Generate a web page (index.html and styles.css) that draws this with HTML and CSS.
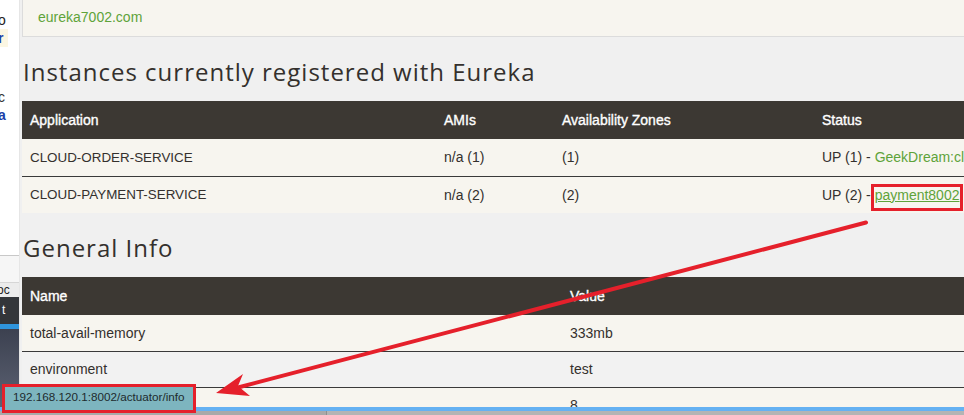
FILE: index.html
```html
<!DOCTYPE html>
<html>
<head>
<meta charset="utf-8">
<link rel="stylesheet" href="styles.css">
</head>
<body>
<div class="screen">
  <div class="main">
    <div class="sidewin">
      <div class="sw-top">
        <div class="sw-line l1">o</div>
        <div class="sw-line l2 hl">r</div>
        <div class="sw-line l3">c</div>
        <div class="sw-line l4 blue">a</div>
      </div>
      <div class="sw-sep"></div>
      <div class="sw-light"></div>
      <div class="sw-tab">oc</div>
      <div class="sw-dark">t</div>
      <div class="sw-blue"></div>
      <div class="sw-desk"></div>
    </div>
    <div class="page">
      <div class="content">
        <div class="topbox"><a class="lnk">eureka7002.com</a></div>
        <h2 class="heading h-first">Instances currently registered with Eureka</h2>
        <table class="tbl inst">
          <colgroup><col class="c1"><col class="c2"><col class="c3"><col class="c4"></colgroup>
          <thead>
            <tr><th>Application</th><th>AMIs</th><th>Availability Zones</th><th>Status</th></tr>
          </thead>
          <tbody>
            <tr><td class="app">CLOUD-ORDER-SERVICE</td><td>n/a (1)</td><td>(1)</td><td>UP (1) - <a class="lnk">GeekDream:cloud-order-service</a></td></tr>
            <tr><td class="app">CLOUD-PAYMENT-SERVICE</td><td>n/a (2)</td><td>(2)</td><td>UP (2) - <a class="lnk ul">payment8002</a> , <a class="lnk ul">payment8001</a></td></tr>
          </tbody>
        </table>
        <h2 class="heading h-second">General Info</h2>
        <table class="tbl info">
          <colgroup><col class="n1"><col class="n2"></colgroup>
          <thead>
            <tr><th>Name</th><th>Value</th></tr>
          </thead>
          <tbody>
            <tr><td>total-avail-memory</td><td>333mb</td></tr>
            <tr class="plain"><td>environment</td><td>test</td></tr>
            <tr><td>num-of-cpus</td><td>8</td></tr>
          </tbody>
        </table>
      </div>
    </div>
  </div>
  <div class="bar-blue"></div>
  <div class="bar-gray"><div class="bg-a"></div><div class="bg-b"></div></div>

  <div class="tooltip">192.168.120.1:8002/actuator/info</div>

  <svg class="annot" width="964" height="415" viewBox="0 0 964 415">
    <rect x="872.5" y="185.5" width="89" height="24" fill="none" stroke="#e5202b" stroke-width="3"/>
    <line x1="866" y1="222.5" x2="238" y2="387.5" stroke="#e5202b" stroke-width="4" stroke-linecap="round"/>
    <polygon points="216,393 243,374 238,386 250,396" fill="#e5202b"/>
  </svg>
</div>
</body>
</html>
```
FILE: styles.css
```css
* { box-sizing: border-box; }
html, body { margin: 0; padding: 0; }
body {
  width: 964px;
  height: 415px;
  overflow: hidden;
  font-family: "Liberation Sans", Arial, sans-serif;
  font-size: 14px;
  color: #34302d;
  background: #f0f0f0;
}
.screen {
  position: relative;
  width: 964px;
  height: 415px;
  display: flex;
  flex-direction: column;
  overflow: hidden;
}
.main {
  display: flex;
  height: 407px;
  flex: none;
}

/* left partially visible window */
.sidewin {
  width: 20px;
  flex: none;
  display: flex;
  flex-direction: column;
  background: #ffffff;
  overflow: hidden;
  font-family: "Liberation Sans", Arial, sans-serif;
  font-size: 14px;
  border-right: 1px solid #e6e6e6;
}
.sw-top { height: 255px; padding-top: 11px; }
.sw-line {
  width: 8px;
  height: 18px;
  line-height: 18px;
  text-indent: -2px;
  color: #222;
  overflow: hidden;
}
.sw-line.hl { background: #fbf6e2; color: #1a3fa8; font-weight: bold; }
.sw-line.l3 { margin-top: 41px; color: #333; }
.sw-line.blue { color: #1a3fa8; font-weight: bold; }
.sw-sep { height: 1px; background: #c8c8c8; }
.sw-light { height: 27px; background: #f6f6f6; border-bottom: 1px solid #d6d6d6; }
.sw-tab {
  height: 14px;
  line-height: 14px;
  font-size: 12px;
  background: #ececec;
  color: #222;
  white-space: nowrap;
  text-indent: -3px;
  overflow: hidden;
}
.sw-dark {
  height: 27px;
  line-height: 27px;
  background: #33363a;
  color: #fff;
  font-size: 12px;
  padding-left: 2px;
}
.sw-blue { height: 5px; background: #2f95dc; }
.sw-desk { flex: 1; background: linear-gradient(#3c4150, #5c6273); }

/* main page */
.page {
  flex: 1;
  overflow: hidden;
  background: #f0f0f0;
  padding-left: 2px;
}
.content { width: 1100px; }
.topbox {
  height: 37px;
  background: #f7f5ef;
  border-left: 1px solid #dcdcdc;
  border-bottom: 1px solid #dcdcdc;
  padding-left: 15px;
  line-height: 34px;
  font-size: 14px;
}
.lnk { color: #5ea33a; text-decoration: none; }
.lnk.ul { text-decoration: underline; }

.heading {
  margin: 0;
  font-family: "Open Sans", sans-serif;
  font-weight: 400;
  font-size: 24px;
  letter-spacing: 1px;
  color: #34302d;
  padding-left: 1px;
  display: flex;
  align-items: center;
}
.h-first { height: 64px; padding-top: 4px; }
.h-second { height: 64px; padding-top: 4px; }

.tbl {
  border-collapse: collapse;
  table-layout: fixed;
  width: 1100px;
}
.tbl th {
  height: 38px;
  background: #3c3833;
  color: #fff;
  text-align: left;
  font-weight: normal;
  -webkit-text-stroke: 0.35px #fff;
  font-size: 14px;
  padding: 0 8px;
  white-space: nowrap;
}
.tbl td {
  height: 36px;
  background: #f7f5ef;
  padding: 0 8px;
  white-space: nowrap;
  overflow: hidden;
  font-size: 14px;
}
.inst td { height: 37px; }
.inst td.app { font-size: 13.4px; }
.tbl tbody tr + tr td { border-top: 1px solid #3a3a3a; }
.tbl tr.plain td { background: #f2f2f2; }
.c1 { width: 414px; }
.c2 { width: 118px; }
.c3 { width: 260px; }
.c4 { width: 308px; }
.n1 { width: 540px; }
.n2 { width: 560px; }

/* taskbar bits below */
.bar-blue { height: 4px; background: #65b1f2; flex: none; }
.bar-gray { height: 4px; flex: none; display: flex; }
.bg-a { width: 327px; background: #a9a9a9; border-right: 1px solid #8f8f8f; }
.bg-b { flex: 1; background: #b4b4b4; }

/* status-bar url tooltip with red annotation frame */
.tooltip {
  position: absolute;
  left: 2px;
  top: 384px;
  width: 194px;
  height: 29px;
  border: 3px solid #e5202b;
  background: #7db5bf;
  color: #1e2b2e;
  font-family: "Liberation Sans", Arial, sans-serif;
  font-size: 11.7px;
  line-height: 20px;
  padding-left: 8px;
  white-space: nowrap;
}

.annot {
  position: absolute;
  left: 0;
  top: 0;
  pointer-events: none;
}
```
